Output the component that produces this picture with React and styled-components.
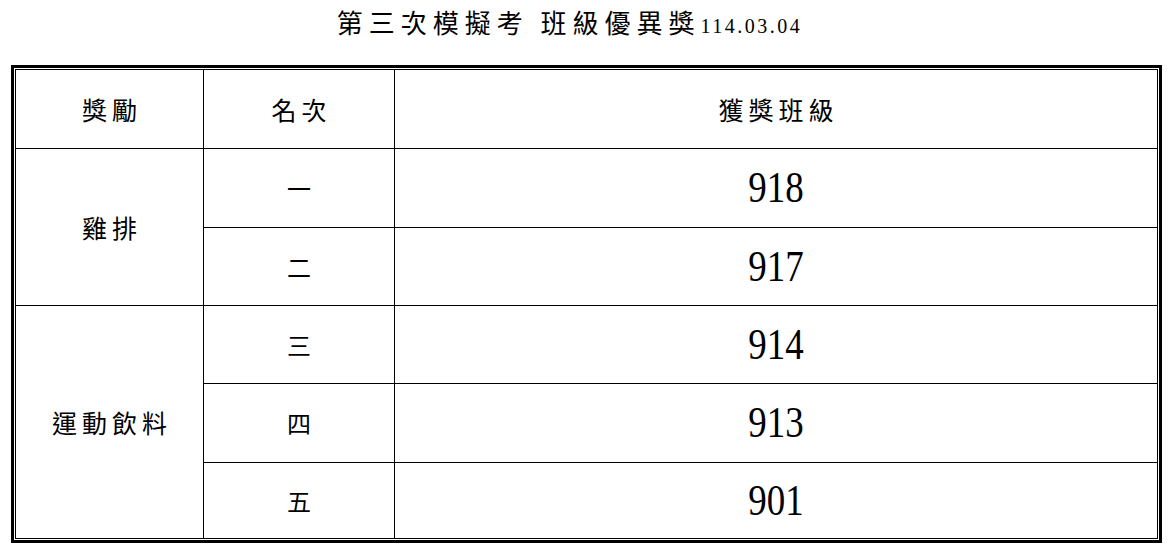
import React from "react";
import styled, { createGlobalStyle } from "styled-components";

const Global = createGlobalStyle`
  html, body { margin: 0; padding: 0; background: #fff; }
  body { font-family: "Noto Sans CJK TC", sans-serif; color: #000; }
`;

const Page = styled.div`
  width: 1172px;
  height: 556px;
  box-sizing: border-box;
  padding: 0 10px 0 11px;
  display: flex;
  flex-direction: column;
`;

const Title = styled.h1`
  margin: 0;
  height: 65px;
  box-sizing: border-box;
  padding: 7px 34px 0 0;
  display: flex;
  justify-content: center;
  align-items: baseline;
  font-weight: 400;
  font-size: 26px;
  line-height: 30px;
  letter-spacing: 6px;
  white-space: pre;
`;

const DateText = styled.span`
  font-family: "Liberation Serif", serif;
  font-size: 20px;
  letter-spacing: 2.5px;
  margin-left: 0;
`;

const Frame = styled.div`
  border: 3px solid #000;
  padding: 1px;
  width: 1151px;
  box-sizing: border-box;
`;

const Grid = styled.div`
  display: grid;
  grid-template-columns: 187px 190px 1fr;
  grid-template-rows: 78px 78px 77px 77px 78px 75px;
  gap: 1px;
  padding: 1px;
  background: #000;
`;

const Cell = styled.div`
  background: #fff;
  display: flex;
  align-items: center;
  justify-content: center;
  grid-row: ${(p) => p.$row || "auto"};
`;

const Label = styled.span`
  font-size: ${(p) => (p.$small ? "24px" : "25px")};
  letter-spacing: 5px;
  padding-left: 5px;
  line-height: 1;
`;

const Num = styled.span`
  display: inline-block;
  font-family: "Liberation Serif", serif;
  font-size: 44px;
  line-height: 1;
  transform: scaleX(0.84);
`;

const rows = [
  { rank: "一", cls: "918" },
  { rank: "二", cls: "917" },
  { rank: "三", cls: "914" },
  { rank: "四", cls: "913" },
  { rank: "五", cls: "901" },
];

export default function App() {
  return (
    <>
      <Global />
      <Page>
        <Title>
          第三次模擬考 班級優異獎<DateText>114.03.04</DateText>
        </Title>
        <Frame>
          <Grid>
            <Cell><Label>獎勵</Label></Cell>
            <Cell><Label>名次</Label></Cell>
            <Cell><Label>獲獎班級</Label></Cell>

            <Cell $row="2 / span 2"><Label>雞排</Label></Cell>
            <Cell><Label $small>{rows[0].rank}</Label></Cell>
            <Cell><Num>{rows[0].cls}</Num></Cell>
            <Cell><Label $small>{rows[1].rank}</Label></Cell>
            <Cell><Num>{rows[1].cls}</Num></Cell>

            <Cell $row="4 / span 3"><Label>運動飲料</Label></Cell>
            {rows.slice(2).map((r) => (
              <React.Fragment key={r.rank}>
                <Cell><Label $small>{r.rank}</Label></Cell>
                <Cell><Num>{r.cls}</Num></Cell>
              </React.Fragment>
            ))}
          </Grid>
        </Frame>
      </Page>
    </>
  );
}
